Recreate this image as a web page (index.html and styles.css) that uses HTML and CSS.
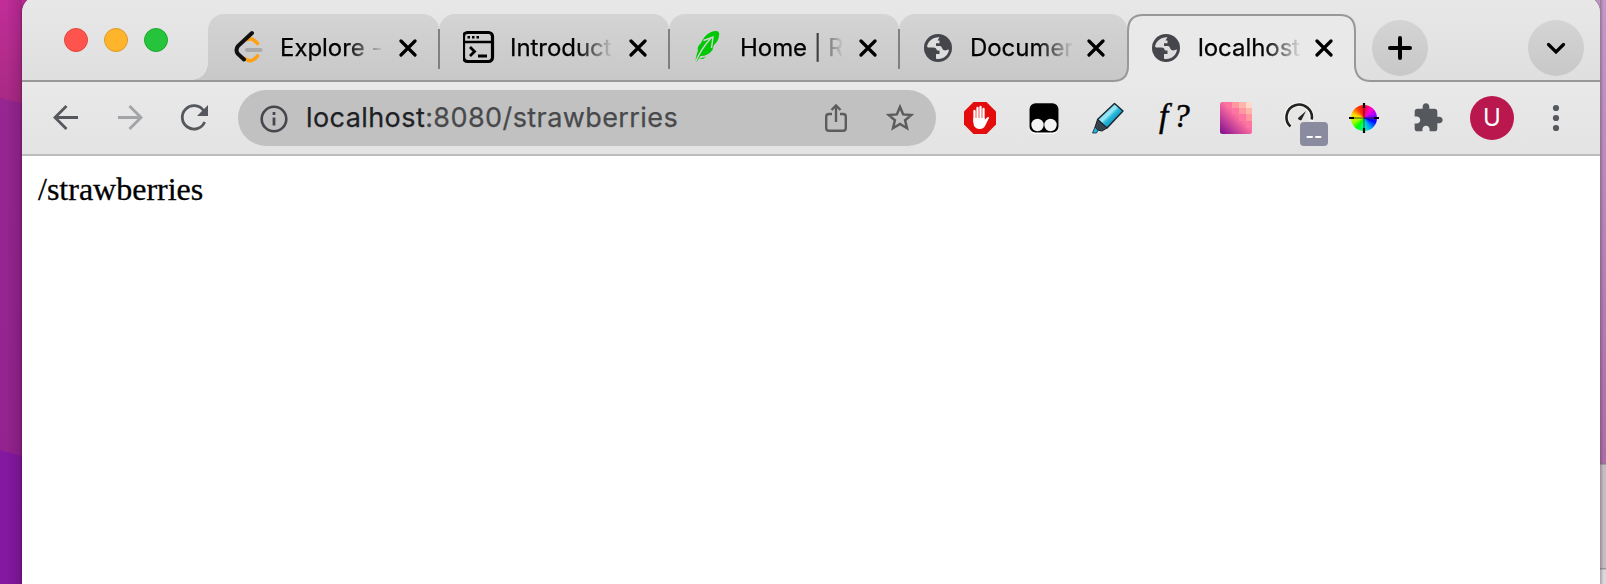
FILE: index.html
```html
<!DOCTYPE html>
<html lang="en">
<head>
<meta charset="utf-8">
<title>localhost:8080/strawberries</title>
<link rel="stylesheet" href="styles.css">
</head>
<body>
<svg class="symbols" width="0" height="0">
  <symbol id="close" viewBox="0 0 18 18"><path d="M2 2L16 16M16 2L2 16" fill="none" stroke="#000" stroke-width="3.2" stroke-linecap="round"/></symbol>
  <symbol id="globe" viewBox="0 0 28 28">
    <circle cx="14" cy="14" r="14" fill="#45464b"/>
    <path d="M15.500 3.200C9 2.800 4.200 6.800 3 12.500L4 13.400H9.500C11.500 13.400 12.500 14.500 13 16.500H15.500V20H12V24.700C18.500 26 24.300 21.800 25 15.500C23 15.800 21.500 17 19.500 16C18 15.200 18.200 13 16.500 12H12V9.200H15.500V6.500H13.500Z" fill="#dedede"/>
  </symbol>
</svg>
<div class="wallpaper">
  <div class="side-left"></div>
  <main class="window">
    <header class="tabstrip">
      <div class="lights"><i class="light red"></i><i class="light amber"></i><i class="light green"></i></div>
      <nav class="tabs">
        <div class="tab first">
          <svg class="favicon" viewBox="0 0 34 34"><path d="M15 9.500Q19 7 24.500 13.500" fill="none" stroke="#ffa116" stroke-width="3.600" stroke-linecap="round"/><path d="M12 28.500Q18 34 24.500 26" fill="none" stroke="#ffa116" stroke-width="3.600" stroke-linecap="round"/><path d="M19 3L5 16Q2 20 5 24L11 29.500" fill="none" stroke="#111" stroke-width="4" stroke-linecap="round"/><path d="M14 20H27.500" stroke="#aaa" stroke-width="4" stroke-linecap="round"/></svg>
          <span class="title">Explore -</span><svg class="close"><use href="#close"/></svg>
        </div>
        <div class="tab">
          <svg class="favicon" viewBox="0 0 34 34"><g transform="translate(-2 0)"><rect x="2.500" y="2.500" width="29" height="29" rx="4" fill="none" stroke="#000" stroke-width="3.200"/><path d="M2 12H32" stroke="#000" stroke-width="2.500"/><path d="M6.500 7.300h2.500m2 0h2.500m2 0h2.500" stroke="#000" stroke-width="2.400"/><path d="M9 17L13.500 21.500L9 26" fill="none" stroke="#000" stroke-width="2.800"/><path d="M17 26H26" stroke="#000" stroke-width="3"/></g></svg>
          <span class="title">Introduct</span><svg class="close"><use href="#close"/></svg>
        </div>
        <div class="tab">
          <svg class="favicon" viewBox="0 0 34 34"><g transform="translate(-2 0)"><path d="M4.500 32C5 26 6 23 7 21Q5.500 17 10 13C13 6 18 1.500 25 1Q29 1 28 6Q27.500 11 23 15Q22 17 21.500 20Q17 26 9.500 26L5.500 32Z" fill="#00c805"/><path d="M4.500 32Q10 19 20 8M12.500 10.500L22 7L20.500 18" fill="none" stroke="#d2d2d2" stroke-width="1.400"/><path d="M8 29L15 26.500L12 29Z" fill="#00c805"/></g></svg>
          <span class="title">Home | R</span><svg class="close"><use href="#close"/></svg>
        </div>
        <div class="tab last">
          <svg class="favicon globe"><use href="#globe"/></svg>
          <span class="title">Documer</span><svg class="close"><use href="#close"/></svg>
        </div>
        <div class="tab active">
          <svg class="outline" viewBox="0 0 260 68"><path d="M0 67Q15 67 15 52V17Q15 1 30 1H227Q242 1 242 17V52Q243 67 258 67H260V68H0Z" fill="#e9e9e9"/><path d="M0 67Q15 67 15 52V17Q15 1 30 1H227Q242 1 242 17V52Q243 67 258 67H260" fill="none" stroke="#989898" stroke-width="2"/></svg>
          <svg class="favicon globe"><use href="#globe"/></svg>
          <span class="title">localhost</span><svg class="close"><use href="#close"/></svg>
        </div>
      </nav>
      <button class="round plus"><svg viewBox="0 0 56 56"><path d="M28 18V38M18 28H38" stroke="#000" stroke-width="4" stroke-linecap="round"/></svg></button>
      <button class="round chevron"><svg viewBox="0 0 56 56"><path d="M20.500 24.500L28 32L35.500 24.500" fill="none" stroke="#000" stroke-width="3.200" stroke-linecap="round"/></svg></button>
    </header>
    <section class="toolbar">
      <svg class="nav" viewBox="0 0 32 32"><path d="M28 15.500H5M16.500 4L5 15.500L16.500 27" fill="none" stroke="#55585d" stroke-width="2.800"/></svg>
      <svg class="nav" viewBox="0 0 32 32"><path d="M4 15.500H27M15.500 4L27 15.500L15.500 27" fill="none" stroke="#a2a4a8" stroke-width="2.800"/></svg>
      <svg class="nav" viewBox="0 0 32 32"><path d="M25.500 8.500A11.700 11.700 0 1 0 26.700 20" fill="none" stroke="#55585d" stroke-width="2.800"/><path d="M30 3V14H19Z" fill="#55585d"/></svg>
      <div class="omnibox">
        <svg class="info" viewBox="0 0 28 28"><circle cx="14" cy="14" r="12.300" fill="none" stroke="#46474d" stroke-width="2.600"/><path d="M14 7V10M14 12.500V20.500" stroke="#46474d" stroke-width="2.800"/></svg>
        <span class="url"><b>localhost</b>:8080/strawberries</span>
        <svg class="share" viewBox="0 0 24 30"><path d="M8 11H5Q2.200 11 2.200 14V25Q2.200 27.800 5 27.800H19Q21.800 27.800 21.800 25V14Q21.800 11 19 11H16M12 19V2.500M7.500 7L12 2.500L16.500 7" fill="none" stroke="#5c5c5c" stroke-width="2.400"/></svg>
        <svg class="star" viewBox="0 0 30 30"><path d="M15 4L18.200 11.400L26.200 12.100L20.100 17.300L22 25.200L15 21L8 25.200L9.900 17.300L3.800 12.100L11.800 11.400Z" fill="none" stroke="#5c5c5c" stroke-width="2.500"/></svg>
      </div>
      <div class="extensions">
        <svg viewBox="0 0 32 32"><path d="M9.500 0H22.500L32 9.500V22.500L22.500 32H9.500L0 22.500V9.500Z" fill="#e40d0d"/><path d="M10.500 9V20M13.500 6V18M16.500 5V18M19.500 7V19" stroke="#fff" stroke-width="2.300" stroke-linecap="round"/><path d="M9.400 16H20.700V18L23 15.500Q24.500 14.500 25.200 15.500L21.500 23Q20 27 15.500 27Q9.400 27 9.400 20Z" fill="#fff"/></svg>
        <svg viewBox="0 0 32 32"><rect x="1" y="1" width="30" height="31" rx="7" fill="#fff"/><rect x="1.500" y="1.300" width="29" height="29.200" rx="6" fill="#000"/><circle cx="9.500" cy="23" r="6.200" fill="#f4f4f4"/><circle cx="22.500" cy="23" r="6.200" fill="#f4f4f4"/></svg>
        <svg viewBox="0 0 32 32"><defs><linearGradient id="ink" x1="0.200" y1="0.200" x2=".8" y2=".8"><stop offset="0" stop-color="#58c4e0"/><stop offset=".4" stop-color="#9be9f6"/><stop offset=".55" stop-color="#2ab8dc"/><stop offset="1" stop-color="#087aa6"/></linearGradient></defs><path d="M22.500 1.500L31 9L15 26L5.500 17.500Z" fill="url(#ink)" stroke="#17242e" stroke-width="1.400" stroke-linejoin="round"/><path d="M5.500 17.500L15 26L10 29L5 28L3 25Z" fill="#36434d" stroke="#17242e"/><path d="M3 25L6 28.500L4.500 31H.5Z" fill="#20b9df" stroke="#17242e" stroke-width=".8"/></svg>
        <span class="fn">f?</span>
        <svg viewBox="0 0 32 32"><defs><linearGradient id="sunset" x1="0" y1="1" x2="1" y2="0"><stop offset="0" stop-color="#7d0b91"/><stop offset=".5" stop-color="#f4669f"/><stop offset=".75" stop-color="#ff9e9c"/><stop offset="1" stop-color="#ffd6c8"/></linearGradient></defs><rect width="32" height="32" rx="2.500" fill="url(#sunset)"/><path d="M6 0H12V6H6ZM12 6H19V12H12ZM19 12H26V19H19ZM26 19H32V26H26Z" fill="#ff75a2"/><path d="M12 0H19V6H12ZM19 6H26V12H19ZM26 12H32V19H26Z" fill="#ff98a0"/><path d="M19 0H26V6H19ZM26 6H32V12H26Z" fill="#ffb5aa"/><path d="M26 0H29.500Q32 0 32 2.500V6H26Z" fill="#ffd9cb"/></svg>
        <div class="speed"><svg viewBox="0 0 32 32"><path d="M7 25A12.700 12.700 0 1 1 27 19" fill="none" stroke="#f6f6f0" stroke-width="4.500"/><path d="M6.500 24.500A12.700 12.700 0 1 1 27.700 17.500" fill="none" stroke="#222" stroke-width="2.600"/><path d="M22 9L17.500 18Q15 19 13.800 16.200Z" fill="#222"/></svg><span class="badge">--</span></div>
        <div class="wheel"><div class="hues"></div><svg viewBox="0 0 32 32"><path d="M16 1V6M16 26V31M1 16H6M26 16H31" stroke="#000" stroke-width="2.200"/><path d="M16 6V26M6 16H26" stroke="#222" stroke-width=".8"/></svg></div>
        <svg viewBox="0 0 24 24"><path fill="#55585d" d="M20.500 11H19V7c0-1.100-.9-2-2-2h-4V3.500C13 2.120 11.880 1 10.500 1S8 2.120 8 3.500V5H4c-1.100 0-1.990.9-1.990 2v3.800H3.500c1.490 0 2.700 1.210 2.700 2.700s-1.210 2.700-2.700 2.700H2V20c0 1.100.9 2 2 2h3.800v-1.500c0-1.490 1.210-2.700 2.700-2.700s2.700 1.210 2.700 2.700V22H17c1.100 0 2-.9 2-2v-4h1.500c1.380 0 2.500-1.120 2.500-2.500S21.880 11 20.500 11z"/></svg>
        <span class="avatar">U</span>
        <svg viewBox="0 0 32 32"><g fill="#55585d"><circle cx="16" cy="6" r="3.100"/><circle cx="16" cy="16" r="3.100"/><circle cx="16" cy="26" r="3.100"/></g></svg>
      </div>
    </section>
    <article class="page">/strawberries</article>
  </main>
  <div class="side-right"></div>
</div>
</body>
</html>
```
FILE: styles.css
```css
* { box-sizing: border-box; }
body { margin: 0; overflow: hidden; font-family: Inter, "Liberation Sans", sans-serif; }
svg { display: block; flex: none; }
.symbols { position: absolute; }
.wallpaper { display: grid; grid-template-columns: 22px 1578px 6px; height: 584px; background: linear-gradient(90deg, #bd2d96 0 50%, #c09ac2 50%); }
.side-left { background: linear-gradient(90deg, transparent 30%, rgba(40,0,40,.18)), linear-gradient(195deg, transparent 440px, #8418a0 441px), linear-gradient(195deg, #c22d99 0, #aa2a85 99px, #962691 101px, #93228e 100%); }
.side-right { background: linear-gradient(90deg, rgba(60,30,60,.3), transparent 60%), linear-gradient(#c19bc5, #aa6fa5 463px, #8d7a8d 463px 464px, #c4bdc1 465px 568px, #999 568px 569px, #d9d9d9 570px); }
.window { border-radius: 18px 18px 0 0; margin-top: -5px; padding-top: 5px; overflow: hidden; background: linear-gradient(#e7e7e7 0, #e7e7e7 20px, #fff 20px); box-shadow: 0 0 3px rgba(0,0,0,.4); }
.tabstrip { display: flex; height: 82px; background: linear-gradient(#e8e8e8, #dfdfdf); border-bottom: 2px solid #989898; }
.lights { display: flex; gap: 16px; padding: 28px 0 0 42px; width: 186px; }
.light { width: 24px; height: 24px; border-radius: 50%; border: 1px solid; }
.red { background: #ff544d; border-color: #df4640; }
.amber { background: #ffb52b; border-color: #dc9a27; }
.green { background: #25c43a; border-color: #1fa832; }
.tabs { display: flex; padding-top: 14px; }
.tab { position: relative; display: flex; align-items: center; width: 230px; height: 66px; padding-left: 25px; border-radius: 16px 16px 0 0; background: linear-gradient(#d4d4d4, #c8c8c8); }
.tab:first-child { width: 231px; }
.tab:nth-child(2), .tab:nth-child(3) { padding-left: 24px; }
.tab:not(.last, .active)::after { content: ""; position: absolute; right: -1px; top: 15px; width: 2px; height: 40px; background: #808080; z-index: 1; }
.first::before { content: ""; position: absolute; left: -16px; bottom: 0; width: 16px; height: 16px; background: radial-gradient(circle at 0 0, transparent 15.500px, #c8c8c8 16px); }
.favicon { width: 34px; height: 34px; }
.favicon.globe { width: 28px; height: 28px; margin: 2px 3px 0; }
.title { width: 102px; margin: 2px 0 0 13px; overflow: hidden; white-space: nowrap; font-size: 24px; line-height: 34px; letter-spacing: -.05px; color: #000; -webkit-text-stroke: .25px #000; -webkit-mask-image: linear-gradient(90deg, #000 66px, transparent 104px); mask-image: linear-gradient(90deg, #000 66px, transparent 104px); }
.close { width: 18px; height: 18px; margin: 2px 0 0 17px; }
.last { width: 228px; padding-left: 22px; }
.last .title, .active .title { margin-left: 15px; }
.last .close, .active .close { margin-left: 15px; }
.active { width: 230px; background: none; padding-left: 22px; }
.outline { position: absolute; left: -14px; top: 0; width: 260px; height: 68px; }
.active .favicon, .active .title, .active .close { position: relative; }
.round { width: 56px; height: 56px; margin: 20px 0 0; padding: 0; border: 0; border-radius: 50%; background: linear-gradient(#d4d4d4, #c8c8c8); }
.plus { margin-left: 15px; }
.chevron { margin-left: auto; margin-right: 16px; }
.toolbar { display: flex; align-items: center; height: 74px; padding-left: 28px; padding-top: 1px; background: linear-gradient(#e9e9e9, #e3e3e3); border-bottom: 2px solid #bdbdbd; }
.nav { width: 32px; height: 32px; margin: -1px 32px 0 0; }
.omnibox { display: flex; align-items: center; width: 698px; height: 56px; margin-left: -4px; margin-top: -1px; padding-left: 22px; border-radius: 28px; background: #c1c1c1; }
.info { width: 28px; height: 28px; margin-top: 1px; }
.url { width: 518px; margin-left: 18px; font-size: 27px; line-height: 40px; letter-spacing: .42px; white-space: nowrap; color: #48494b; -webkit-text-stroke: .25px; }
.url b { font-weight: 400; color: #202124; }
.share { width: 24px; height: 30px; }
.star { width: 30px; height: 30px; margin-left: 37px; }
.extensions { display: flex; align-items: center; gap: 32px; margin-left: 28px; margin-top: -1px; }
.extensions svg { width: 32px; height: 32px; }
.fn { width: 32px; font: italic 33px/32px "Liberation Serif", serif; letter-spacing: 5px; padding-left: 3px; margin-top: -4px; -webkit-text-stroke: .5px #000; }
.speed { position: relative; }
.badge { position: absolute; left: 16px; top: 20px; width: 28px; height: 24px; border-radius: 4px; background: #8b8b9f; color: #fff; font-size: 18px; font-weight: 600; line-height: 27px; text-align: center; }
.wheel { display: grid; width: 32px; height: 32px; }
.wheel > * { grid-area: 1 / 1; }
.hues { place-self: center; width: 26px; height: 26px; border-radius: 50%; background: conic-gradient(#f02, #f0c, #a0f, #00f, #09f, #0fa, #0f0, #af0, #fd0, #f40, #f02); }
.avatar { width: 44px; height: 44px; margin: 0 -6px; border-radius: 50%; background: #ba174f; color: #fff; font-size: 24px; line-height: 44px; text-align: center; }
.page { height: 428px; padding: 15px 16px; background: #fff; font: 32px/36px "Liberation Serif", serif; -webkit-text-stroke: .3px #000; }
```
